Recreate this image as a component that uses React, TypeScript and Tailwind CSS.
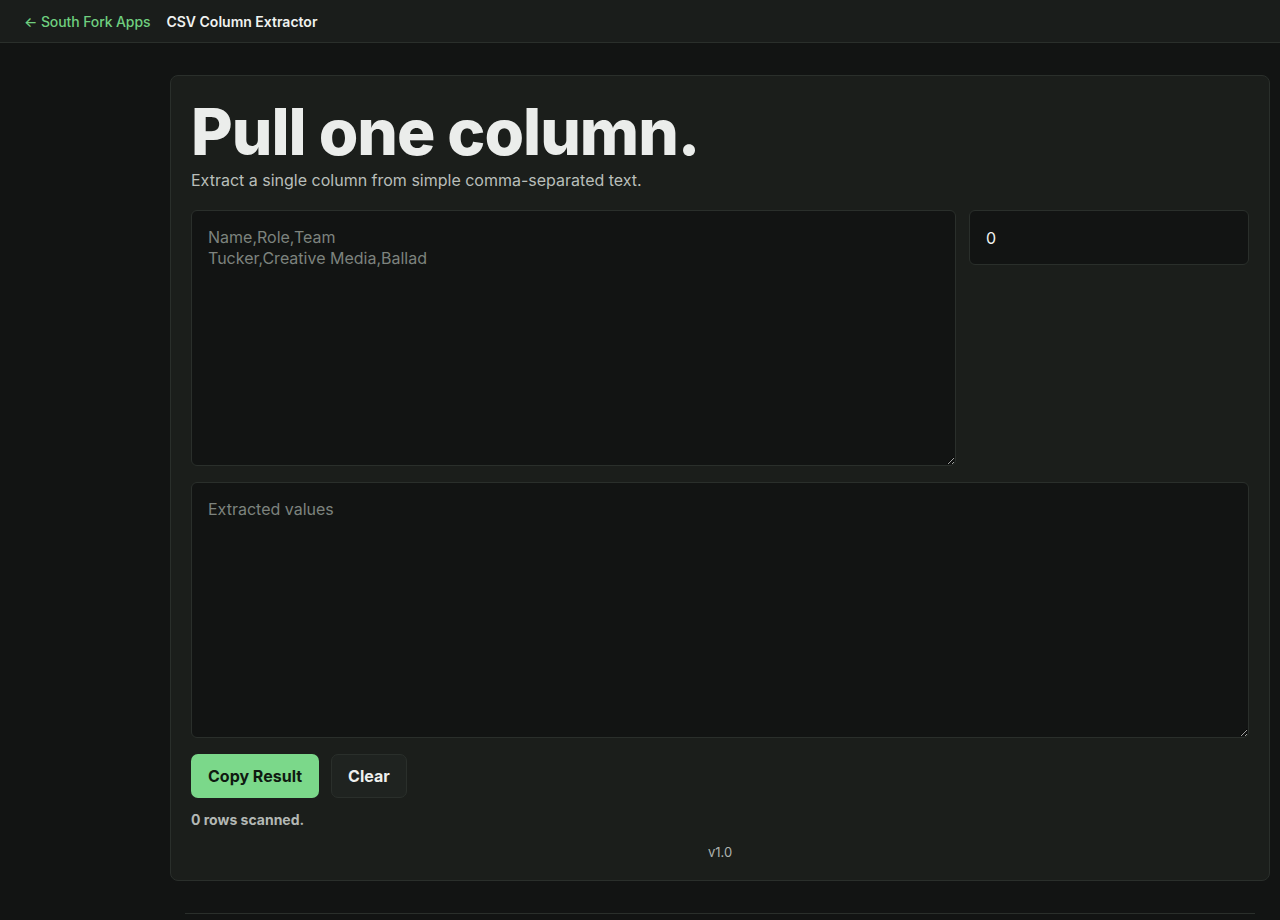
import React from "react";

export default function App() {
  return (
    <div className="min-h-[920px] bg-[#121413] text-[#e8ebe8]" style={{ fontFamily: "Inter, 'Noto Sans', sans-serif" }}>
      <header className="h-[43px] bg-[#1a1d1b] border-b border-[#2a2f2b] flex items-center pl-[24px] gap-4 text-[14px]">
        <a className="text-[#6fcf7f] font-medium tracking-[-0.1px]">← South Fork Apps</a>
        <span className="font-semibold text-[#f0f2f0] tracking-[0px]">CSV Column Extractor</span>
      </header>
      <main className="pt-[32px]">
        <div className="ml-[170px] w-[1100px] rounded-[8px] border border-[#2a2f2b] bg-[#1b1e1b] px-[20px] pt-[22px] pb-[17px]">
          <h1 className="text-[64px] leading-[68px] font-extrabold tracking-[-1px] text-[#ebedeb]">Pull one column.</h1>
          <p className="mt-[2px] text-[16px] text-[#b9beba] tracking-[0px]">Extract a single column from simple comma-separated text.</p>
          <div className="mt-[18px] grid grid-cols-[1fr_280px] gap-[13px] items-start">
            <textarea
              className="h-[256px] rounded-[6px] border border-[#2a2f2b] bg-[#121413] px-[16px] py-[16px] text-[16px] leading-[21px] text-[#e8ebe8] placeholder:text-[#7d837e] outline-none"
              placeholder={"Name,Role,Team\nTucker,Creative Media,Ballad"}
            />
            <input
              className="h-[55px] rounded-[6px] border border-[#2a2f2b] bg-[#121413] px-[16px] text-[16px] text-[#f0f2f0] outline-none"
              defaultValue="0"
            />
          </div>
          <textarea
            className="mt-[16px] block w-full h-[256px] rounded-[6px] border border-[#2a2f2b] bg-[#121413] px-[16px] py-[16px] text-[16px] leading-[21px] text-[#e8ebe8] placeholder:text-[#7d837e] outline-none"
            placeholder="Extracted values"
          />
          <div className="mt-[16px] flex gap-[12px]">
            <button className="h-[44px] px-[17px] rounded-[7px] bg-[#7bd88a] text-[#0f1a11] text-[16px] font-bold tracking-[0px]">Copy Result</button>
            <button className="h-[44px] px-[16px] rounded-[7px] bg-[#1f2320] border border-[#2a2f2b] text-[#eef0ee] text-[16px] font-bold tracking-[0px]">Clear</button>
          </div>
          <p className="mt-[11px] text-[14px] font-bold text-[#b3b8b4] tracking-[0px]">0 rows scanned.</p>
          <p className="mt-[13px] text-center text-[13px] text-[#aeb3af]">v1.0</p>
        </div>
        <div className="ml-[185px] w-[1070px] mt-[32px] border-t border-[#2a2f2b] h-[7px]" />
      </main>
    </div>
  );
}
